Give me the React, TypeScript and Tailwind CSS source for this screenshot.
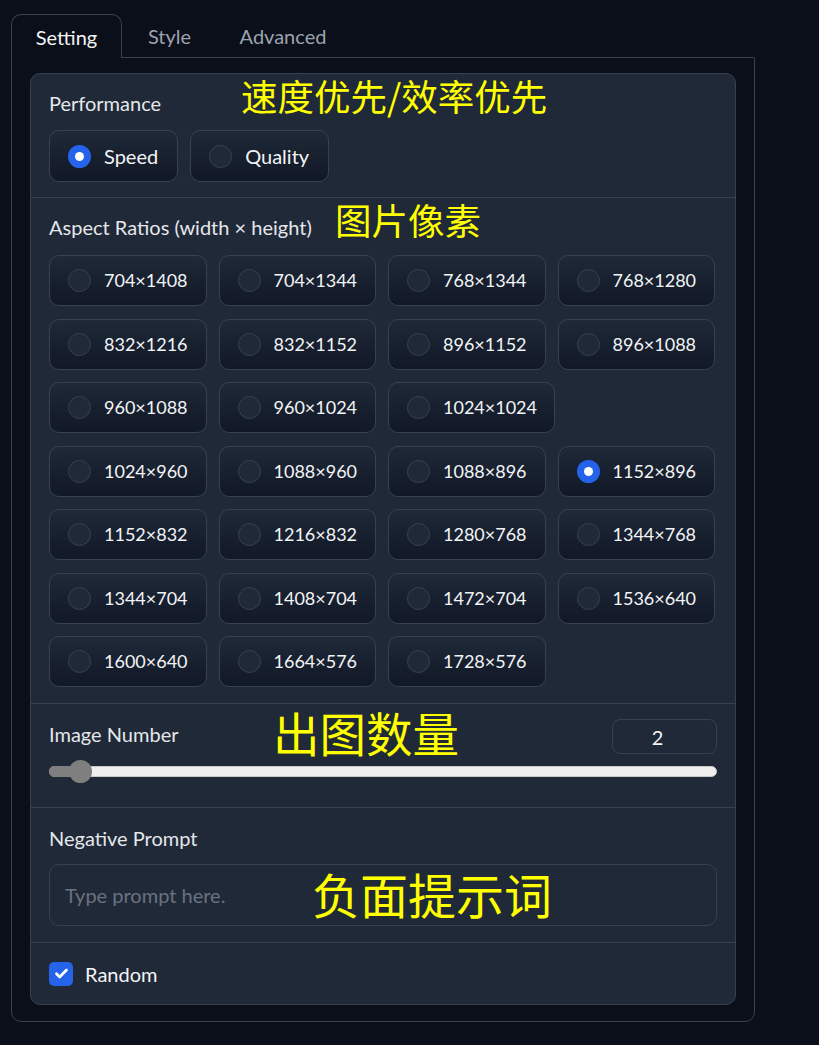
import React from "react";

const ratios: string[] = [
  "704×1408", "704×1344", "768×1344", "768×1280",
  "832×1216", "832×1152", "896×1152", "896×1088",
  "960×1088", "960×1024", "1024×1024",
  "1024×960", "1088×960", "1088×896", "1152×896",
  "1152×832", "1216×832", "1280×768", "1344×768",
  "1344×704", "1408×704", "1472×704", "1536×640",
  "1600×640", "1664×576", "1728×576",
];

function Radio({ checked }: { checked: boolean }) {
  return checked ? (
    <span className="flex h-[23px] w-[23px] shrink-0 items-center justify-center rounded-full bg-[#2563eb]">
      <span className="h-[9px] w-[9px] rounded-full bg-white" />
    </span>
  ) : (
    <span className="h-[23px] w-[23px] shrink-0 rounded-full border border-[#374151] bg-[#1f2937]" />
  );
}

function Option({ label, checked, w, h, size }: { label: string; checked: boolean; w?: string; h: string; size: string }) {
  return (
    <div
      className={`flex items-center gap-[13px] rounded-[10px] border border-[#374151] bg-gradient-to-t from-[#111827] to-[#1f2937] pl-[18px] pr-[19px] text-[#f3f4f6] ${size} ${w ?? ""} ${h}`}
    >
      <Radio checked={checked} />
      <span>{label}</span>
    </div>
  );
}

const yellow = "absolute whitespace-nowrap leading-none text-[#ffff00] [font-family:'Noto_Sans_CJK_SC',sans-serif]";

export default function App() {
  return (
    <div className="relative min-h-[1045px] w-[819px] bg-[#0b0f19] [font-family:Lato,'Noto_Sans',sans-serif]">
      <div className="pl-[11px] pt-[14px]">
        <div className="w-[744px]">
          {/* Tabs */}
          <div className="flex h-[43px] items-stretch">
            <div className="relative z-10 -mb-px flex w-[111px] items-center justify-center rounded-t-[10px] border border-b-0 border-[#374151] bg-[#0b0f19] text-[20px] text-[#f3f4f6]">
              Setting
            </div>
            <div className="flex w-[95px] items-center justify-center text-[20px] text-[#9ca3af]">Style</div>
            <div className="flex w-[132px] items-center justify-center text-[20px] text-[#9ca3af]">Advanced</div>
          </div>
          {/* Panel */}
          <div className="rounded-b-[10px] border border-[#374151] px-[18px] pb-[16px] pt-[15px]">
            <div className="flex flex-col overflow-hidden rounded-[10px] border border-[#374151] bg-[#1f2937]">
              {/* Performance */}
              <div className="flex h-[123px] flex-col px-[18px] pt-[19px]">
                <div className="h-[20px] text-[20px] leading-[20px] text-[#e5e7eb]">Performance</div>
                <div className="mt-[17px] flex gap-[12px]">
                  <Option label="Speed" checked={true} h="h-[52px]" size="text-[20px]" />
                  <Option label="Quality" checked={false} h="h-[52px]" size="text-[20px]" />
                </div>
              </div>
              {/* Aspect ratios */}
              <div className="flex h-[506px] flex-col border-t border-[#374151] px-[18px] pt-[19px]">
                <div className="h-[20px] text-[20px] leading-[20px] text-[#e5e7eb]">Aspect Ratios (width × height)</div>
                <div className="mt-[18px] flex flex-wrap gap-x-[12px] gap-y-[12.5px]">
                  {ratios.map((r) => (
                    <Option
                      key={r}
                      label={r}
                      checked={r === "1152×896"}
                      w={r === "1024×1024" ? "w-[167px]" : "w-[157.5px]"}
                      h="h-[51px]"
                      size="text-[18px]"
                    />
                  ))}
                </div>
              </div>
              {/* Image number */}
              <div className="flex h-[104px] flex-col border-t border-[#374151] px-[18px] pt-[15px]">
                <div className="flex items-start justify-between">
                  <div className="mt-[5px] h-[20px] text-[20px] leading-[20px] text-[#e5e7eb]">Image Number</div>
                  <div className="flex h-[35px] w-[105px] items-center justify-center rounded-[8px] border border-[#374151] bg-[#1f2937] pr-[14px] text-[20px] text-[#f3f4f6]">
                    2
                  </div>
                </div>
                <div className="relative mt-[12px] h-[11px] w-full rounded-full border border-[#c8c8c8] bg-[#efefef]">
                  <div className="absolute -left-px -top-px h-[11px] w-[33px] rounded-l-full bg-[#7f7f7f]" />
                  <div className="absolute left-[19px] top-[-7px] h-[23px] w-[23px] rounded-full bg-[#7f7f7f]" />
                </div>
              </div>
              {/* Negative prompt */}
              <div className="flex h-[135px] flex-col border-t border-[#374151] px-[18px] pt-[20px]">
                <div className="h-[20px] text-[20px] leading-[20px] text-[#e5e7eb]">Negative Prompt</div>
                <div className="mt-[16px] flex h-[62px] items-center rounded-[10px] border border-[#374151] bg-[#1f2937] px-[15px] text-[20px] text-[#6b7280]">
                  Type prompt here.
                </div>
              </div>
              {/* Random */}
              <div className="flex h-[62px] items-center gap-[12px] border-t border-[#374151] px-[18px]">
                <span className="flex h-[24px] w-[24px] items-center justify-center rounded-[5px] bg-[#2563eb]">
                  <svg width="15" height="15" viewBox="0 0 24 24" fill="none" stroke="white" strokeWidth="4.5" strokeLinecap="round" strokeLinejoin="round">
                    <path d="M4 12.5l5 5L20 6.5" />
                  </svg>
                </span>
                <span className="text-[20px] text-[#f3f4f6]">Random</span>
              </div>
            </div>
          </div>
        </div>
      </div>

      {/* Annotations */}
      <div className={`${yellow} left-[241px] top-[78px] text-[36.5px]`}>速度优先/效率优先</div>
      <div className={`${yellow} left-[335px] top-[202px] text-[36.5px]`}>图片像素</div>
      <div className={`${yellow} left-[273px] top-[709px] text-[46.5px]`}>出图数量</div>
      <div className={`${yellow} left-[312px] top-[869px] text-[48px]`}>负面提示词</div>
    </div>
  );
}
